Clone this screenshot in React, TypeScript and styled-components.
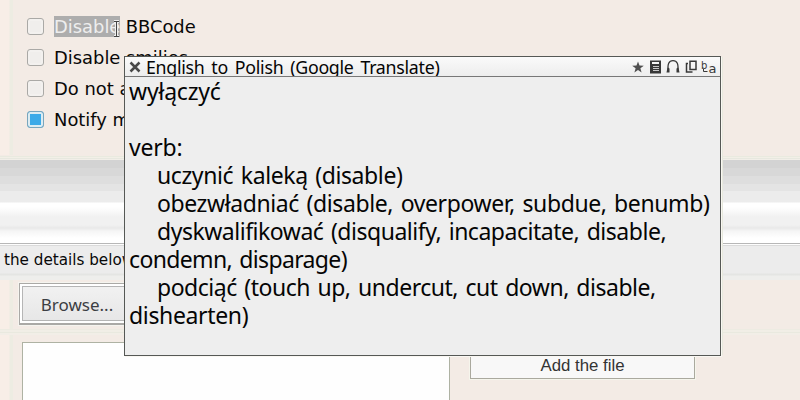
import React from 'react';
import styled, { createGlobalStyle } from 'styled-components';

const Global = createGlobalStyle`
  * { box-sizing: border-box; }
  body { margin: 0; background: #f3ebe5; overflow: hidden; }
`;

const Page = styled.main`
  position: relative;
  width: 800px;
  height: 400px;
  overflow: hidden;
  display: flex;
  flex-direction: column;
  background: #f3ebe5;
  color: #080808;
  font-family: 'DejaVu Sans', sans-serif;
`;

const Row = styled.section<{ $height: number }>`
  display: flex;
  flex: none;
  height: ${(p) => p.$height}px;
`;

const Gutter = styled.div`
  flex: none;
  width: 13px;
  background: linear-gradient(90deg, #f8eee7 0 9px, #edece2 10px 14px);
`;

const Options = styled.div`
  display: flex;
  flex-direction: column;
  padding: 11px 0 0 14px;
`;

const Option = styled.label`
  display: flex;
  align-items: center;
  height: 31px;
  gap: 10px;
  font-size: 17.9px;
  white-space: nowrap;
`;

const Box = styled.span<{ $checked?: boolean }>`
  width: 17px;
  height: 17px;
  border: 1px solid ${(p) => (p.$checked ? '#79a6bd' : '#aaa9a6')};
  border-radius: 3px;
  background: ${(p) => (p.$checked ? '#3caae8' : '#f0eeec')};
  box-shadow: inset 0 0 0 2px ${(p) => (p.$checked ? '#dcecf2' : '#f3f1ef')};
`;

const Selected = styled.span`
  display: inline-block;
  width: 66px;
  height: 21px;
  line-height: 21px;
  color: #eeeeee;
  background: #adadad;
`;

const Divider = styled.div`
  flex: none;
  height: 5px;
  background: linear-gradient(#f3ebe5 0 1px, #e9eadf 1px 2px, #f2efe7 2px 3px, #e7e8df 3px 4px, #f1eee8 4px);
`;

const Band = styled.div`
  flex: none;
  height: 84px;
  background: linear-gradient(
    #d3d3d3 0 8px, #d8d8d8 8px 16px, #dedede 16px 24px, #e4e4e4 24px 31px,
    #ececec 31px 42px, #ffffff 43px 47px, #f7f7f7 53px, #f1f1f1 57px 65px,
    #e9e9e9 68px, #f5f5f5 71px, #ffffff 78px 83px, #b7b7b7 83px
  );
`;

const Details = styled.div`
  flex: none;
  height: 36px;
  padding: 7px 0 0 4px;
  font-size: 15.2px;
  line-height: 18px;
  background: linear-gradient(#fdfdfd 0 1px, #dadada 1px 2px, #ececec 2px 29px, #e4e5e3 30px 31px, #eeeeec 32px);
`;

const Browse = styled.button`
  width: 116px;
  height: 42px;
  margin: 3px 0 0 6px;
  padding: 2px 0 0;
  border: 1px solid #aaa9a6;
  border-bottom-width: 2px;
  outline: 1px solid #f5f4ef;
  box-shadow: inset 0 0 0 2px #fff, inset 0 0 0 3px #b5b5b5;
  background: linear-gradient(#f2f2f2, #e6e6e6);
  color: #3c3e43;
  font: 17px 'Noto Sans', sans-serif;
`;

const Upload = styled.div`
  flex: 1;
  display: flex;
`;

const FileArea = styled.div`
  width: 428px;
  height: 90px;
  margin: 7px 20px 0 9px;
  border: 1px solid #aeb2a3;
  border-bottom: 0;
  background: #fefefe;
`;

const Add = styled.button`
  width: 225px;
  height: 32px;
  margin-top: 12px;
  padding: 5px 0 0;
  border: 1px solid #aaa99e;
  outline: 1px solid #f5f5ec;
  background: #f8f8f8;
  color: #333;
  font: 16.8px 'Liberation Sans', sans-serif;
`;

const RowDivider = styled.div`
  flex: none;
  height: 6px;
  background: linear-gradient(#edebe2 0 1px, #f1eee6 1px 3px, #e9e9df 3px 4px, #f2eee7 4px);
`;

const Popup = styled.aside`
  position: absolute;
  left: 124px;
  top: 56px;
  width: 597px;
  height: 300px;
  border: 1px solid #555855;
  background: #eeeeee;
  color: #050505;
  font-family: 'Noto Sans', sans-serif;
  box-shadow: 1px 1px 0 #f9f7f2, 3px 0 0 -1px #e7e9dd;
`;

const TitleBar = styled.header`
  display: flex;
  align-items: center;
  height: 20px;
  overflow: hidden;
  padding: 0 3px 0 4px;
  border-bottom: 1px solid #777;
  background: linear-gradient(#fafafa, #ededed);
`;

const Title = styled.h1`
  flex: 1;
  margin: 2px 0 0 5px;
  font-size: 17.8px;
  font-weight: 400;
  line-height: 19px;
  letter-spacing: -0.28px;
  word-spacing: 2.5px;
  white-space: nowrap;
`;

const Tools = styled.div`
  display: flex;
  align-items: center;
  gap: 3px;
  height: 19px;
  color: #383838;
`;

const Translation = styled.div`
  padding: 0 0 0 4px;
  font-size: 23px;
  line-height: 28px;
  word-spacing: 2px;
`;

const Line = styled.p<{ $indent?: boolean; $tracking?: number }>`
  height: 28px;
  margin: 0;
  padding-left: ${(p) => (p.$indent ? 28 : 0)}px;
  letter-spacing: ${(p) => p.$tracking ?? -0.4}px;
  white-space: nowrap;
`;

const Cursor = styled.svg`
  position: absolute;
  left: 113px;
  top: 20px;
`;

const options = ['Disable smilies', 'Do not a', 'Notify m'];

const lines = [
  { text: 'wyłączyć', tracking: -0.2 },
  { text: '' },
  { text: 'verb:', tracking: -0.2 },
  { text: 'uczynić kaleką (disable)', indent: true },
  { text: 'obezwładniać (disable, overpower, subdue, benumb)', indent: true, tracking: -0.4 },
  { text: 'dyskwalifikować (disqualify, incapacitate, disable,', indent: true, tracking: -0.48 },
  { text: 'condemn, disparage)', tracking: -0.65 },
  { text: 'podciąć (touch up, undercut, cut down, disable,', indent: true, tracking: -0.48 },
  { text: 'dishearten)', tracking: -0.35 },
];

function ToolIcons() {
  return (
    <Tools>
      <svg width="14" height="16" viewBox="0 0 14 16">
        <path d="M8 2.500l1.500 4 4.300.2-3.400 2.600 1.200 4.100L8 11.100l-3.600 2.300 1.200-4.100-3.400-2.600 4.300-.2z" fill="#505050" />
      </svg>
      <svg width="14" height="16" viewBox="0 0 14 16">
        <path d="M3 1.500h11v13H3zM5 3v2h7V3z" fill="currentColor" fillRule="evenodd" />
        <path d="M6 7.500h6M6 9.500h6M6 11.500h6" stroke="#c8c8c8" />
      </svg>
      <svg width="17" height="16" viewBox="0 0 17 16">
        <path d="M4.500 12.500C3 5 5 1.700 9 1.700S15 5 13.500 12.500" fill="none" stroke="currentColor" strokeWidth="1.300" />
        <path d="M3.500 8.500L5.500 9.500v4H2.500zM14.500 8.500L12.500 9.500v4h3z" fill="currentColor" />
      </svg>
      <svg width="14" height="16" viewBox="0 0 14 16">
        <path d="M6 2.200h6v8.300H6zM4 4.500H2.500v8.500h6" fill="none" stroke="currentColor" strokeWidth="1.500" />
      </svg>
      <svg width="16" height="16" viewBox="0 0 16 16" fill="currentColor" fontFamily="DejaVu Sans">
        <text x="0" y="9.500" fontSize="10">b</text>
        <text x="7.500" y="14" fontSize="13">a</text>
        <path d="M2.500 10v2.500h4" fill="none" stroke="currentColor" />
      </svg>
    </Tools>
  );
}

export default function App() {
  return (
    <>
      <Global />
      <Page>
        <Row $height={155}>
          <Gutter />
          <Options>
            <Option>
              <Box />
              <span><Selected>Disable</Selected> BBCode</span>
            </Option>
            {options.map((text, i) => (
              <Option key={text}>
                <Box $checked={i === 2} />
                <span>{text}</span>
              </Option>
            ))}
          </Options>
        </Row>
        <Divider />
        <Band />
        <Details>the details below</Details>
        <Row $height={49}>
          <Gutter />
          <Browse>Browse...</Browse>
        </Row>
        <RowDivider />
        <Upload>
          <Gutter />
          <FileArea />
          <Add>Add the file</Add>
        </Upload>
        <Cursor width="7" height="18" viewBox="0 0 7 18">
          <path d="M1 1.500h5M3.500 2v14M1 16.500h5" fill="none" stroke="#eee" strokeWidth="3" />
          <path d="M1 1.500h5M3.500 2v14M1 16.500h5" fill="none" stroke="#444" />
        </Cursor>
        <Popup>
          <TitleBar>
            <svg width="12" height="12" viewBox="0 0 12 12">
              <path d="M1.500 1.500l9 9m0-9l-9 9" stroke="#494949" strokeWidth="2.500" />
            </svg>
            <Title>English to Polish (Google Translate)</Title>
            <ToolIcons />
          </TitleBar>
          <Translation>
            {lines.map((line, i) => (
              <Line key={i} $indent={line.indent} $tracking={line.tracking}>{line.text}</Line>
            ))}
          </Translation>
        </Popup>
      </Page>
    </>
  );
}
